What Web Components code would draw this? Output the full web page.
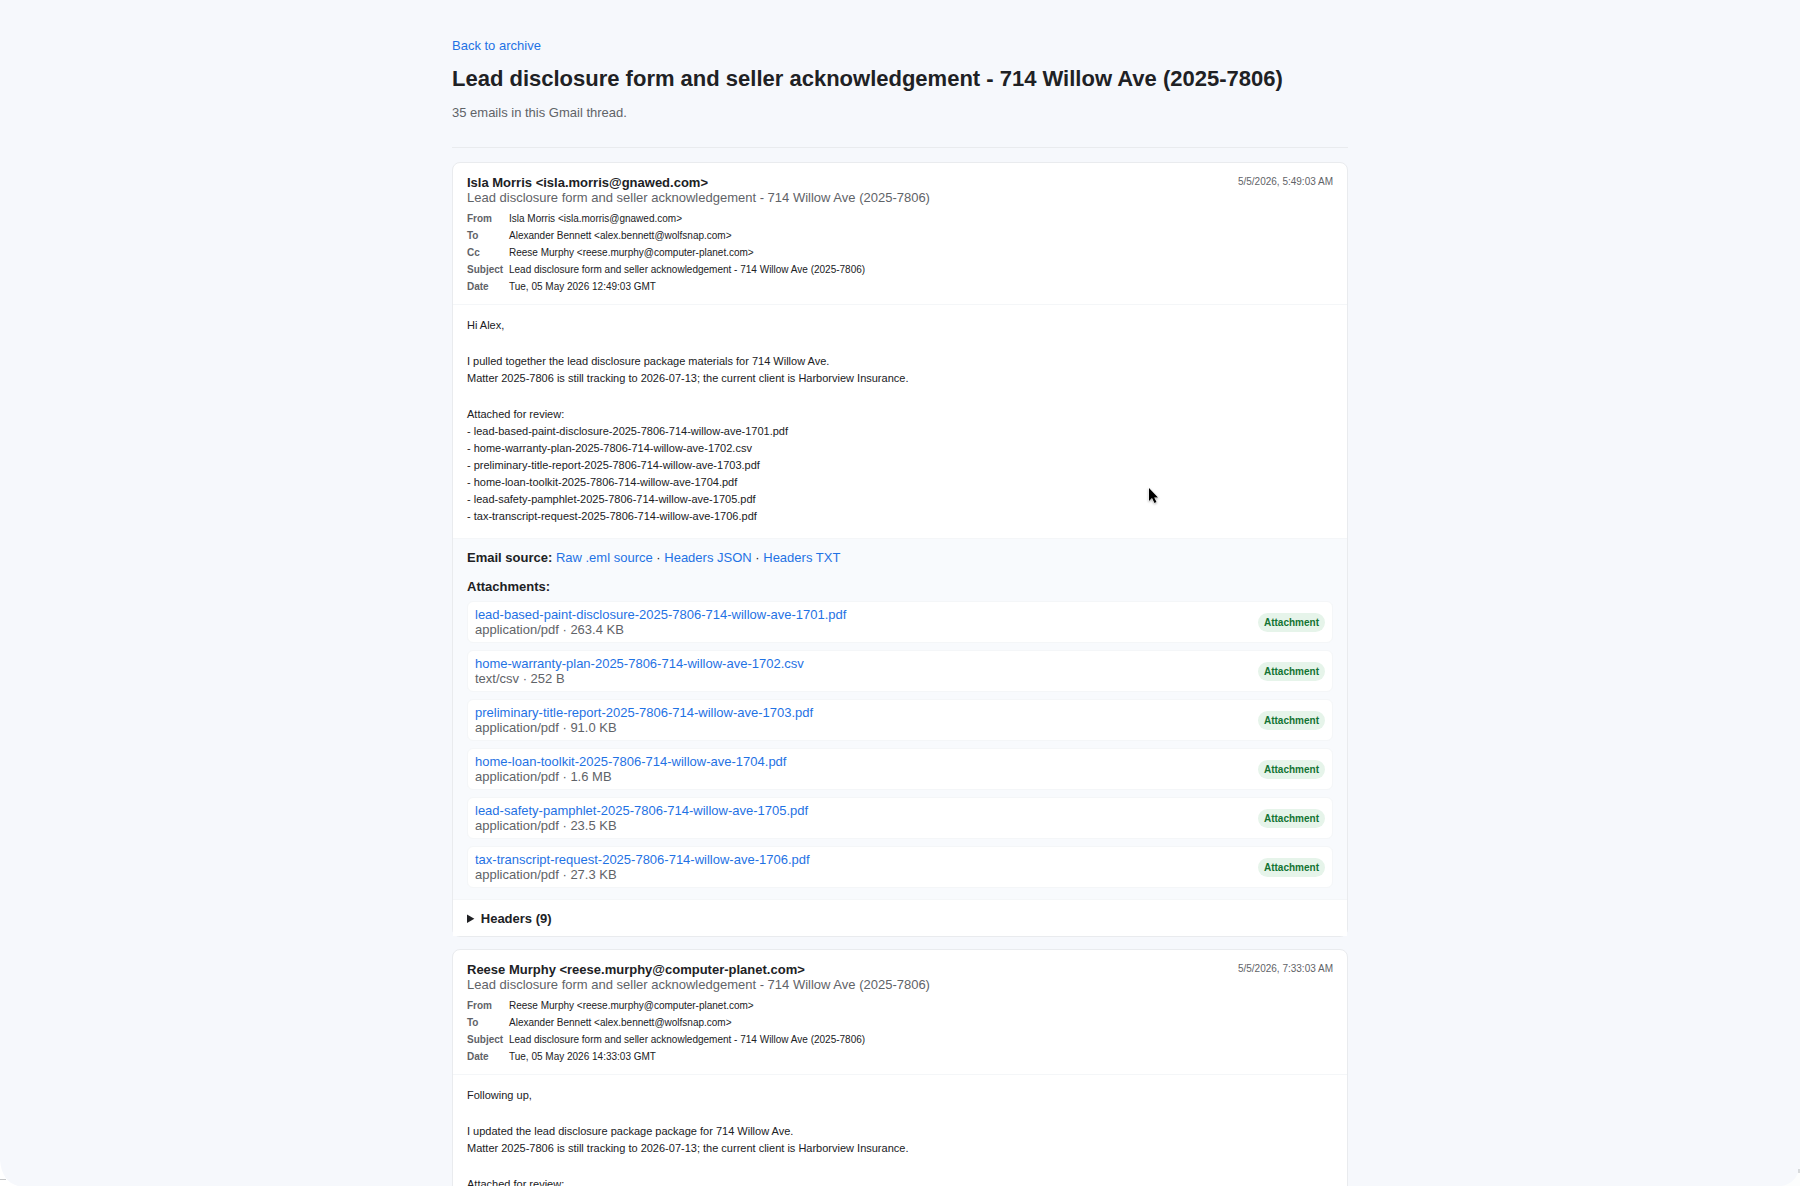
<!DOCTYPE html>
<html lang="en">
<head>
<meta charset="utf-8">
<title>Lead disclosure form and seller acknowledgement - 714 Willow Ave (2025-7806)</title>
<style>
  :root {
    --bg: #f6f8fc;
    --surface: #ffffff;
    --subtle: #f8fafd;
    --line: #e9ebee;
    --line-soft: #f4f6f8;
    --text: #202124;
    --muted: #5f6368;
    --link: #1f72e4;
    --ok: #137333;
    --ok-bg: #e6f4ea;
  }

  html {
    height: 100%;
    overflow: hidden;
  }

  body {
    margin: 0;
    background: var(--bg);
    color: var(--text);
    font: 13px/15px "Liberation Sans", Arial, sans-serif;
  }
</style>
</head>
<body>

<thread-page>
  <thread-header
    slot="header"
    heading="Lead disclosure form and seller acknowledgement - 714 Willow Ave (2025-7806)"
    summary="35 emails in this Gmail thread."></thread-header>

  <email-card
    sender="Isla Morris &lt;isla.morris@gnawed.com&gt;"
    subject="Lead disclosure form and seller acknowledgement - 714 Willow Ave (2025-7806)"
    received="5/5/2026, 5:49:03 AM"
    headers="9">
    <meta-row slot="meta" label="From">Isla Morris &lt;isla.morris@gnawed.com&gt;</meta-row>
    <meta-row slot="meta" label="To">Alexander Bennett &lt;alex.bennett@wolfsnap.com&gt;</meta-row>
    <meta-row slot="meta" label="Cc">Reese Murphy &lt;reese.murphy@computer-planet.com&gt;</meta-row>
    <meta-row slot="meta" label="Subject">Lead disclosure form and seller acknowledgement - 714 Willow Ave (2025-7806)</meta-row>
    <meta-row slot="meta" label="Date">Tue, 05 May 2026 12:49:03 GMT</meta-row>

    <p>Hi Alex,</p>
    <p>I pulled together the lead disclosure package materials for 714 Willow Ave.<br>Matter 2025-7806 is still tracking to 2026-07-13; the current client is Harborview Insurance.</p>
    <p>Attached for review:<br>- lead-based-paint-disclosure-2025-7806-714-willow-ave-1701.pdf<br>- home-warranty-plan-2025-7806-714-willow-ave-1702.csv<br>- preliminary-title-report-2025-7806-714-willow-ave-1703.pdf<br>- home-loan-toolkit-2025-7806-714-willow-ave-1704.pdf<br>- lead-safety-pamphlet-2025-7806-714-willow-ave-1705.pdf<br>- tax-transcript-request-2025-7806-714-willow-ave-1706.pdf</p>

    <attachment-item slot="attachments" name="lead-based-paint-disclosure-2025-7806-714-willow-ave-1701.pdf" type="application/pdf" size="263.4 KB"></attachment-item>
    <attachment-item slot="attachments" name="home-warranty-plan-2025-7806-714-willow-ave-1702.csv" type="text/csv" size="252 B"></attachment-item>
    <attachment-item slot="attachments" name="preliminary-title-report-2025-7806-714-willow-ave-1703.pdf" type="application/pdf" size="91.0 KB"></attachment-item>
    <attachment-item slot="attachments" name="home-loan-toolkit-2025-7806-714-willow-ave-1704.pdf" type="application/pdf" size="1.6 MB"></attachment-item>
    <attachment-item slot="attachments" name="lead-safety-pamphlet-2025-7806-714-willow-ave-1705.pdf" type="application/pdf" size="23.5 KB"></attachment-item>
    <attachment-item slot="attachments" name="tax-transcript-request-2025-7806-714-willow-ave-1706.pdf" type="application/pdf" size="27.3 KB"></attachment-item>
  </email-card>

  <email-card
    sender="Reese Murphy &lt;reese.murphy@computer-planet.com&gt;"
    subject="Lead disclosure form and seller acknowledgement - 714 Willow Ave (2025-7806)"
    received="5/5/2026, 7:33:03 AM">
    <meta-row slot="meta" label="From">Reese Murphy &lt;reese.murphy@computer-planet.com&gt;</meta-row>
    <meta-row slot="meta" label="To">Alexander Bennett &lt;alex.bennett@wolfsnap.com&gt;</meta-row>
    <meta-row slot="meta" label="Subject">Lead disclosure form and seller acknowledgement - 714 Willow Ave (2025-7806)</meta-row>
    <meta-row slot="meta" label="Date">Tue, 05 May 2026 14:33:03 GMT</meta-row>

    <p>Following up,</p>
    <p>I updated the lead disclosure package package for 714 Willow Ave.<br>Matter 2025-7806 is still tracking to 2026-07-13; the current client is Harborview Insurance.</p>
    <p>Attached for review:</p>
  </email-card>
</thread-page>

<screen-overlay></screen-overlay>

<script>
  class ThreadPage extends HTMLElement {
    constructor() {
      super();

      this.attachShadow({ mode: "open" }).innerHTML = `
        <style>
          :host {
            display: block;
          }

          main {
            box-sizing: border-box;
            max-width: 922px;
            margin: 0 auto;
            padding: 38px 13px 0;
          }

          .emails {
            display: flex;
            flex-direction: column;
            gap: 12px;
            margin-top: 14px;
          }
        </style>
        <main>
          <slot name="header"></slot>
          <div class="emails"><slot></slot></div>
        </main>
      `;
    }
  }

  class ThreadHeader extends HTMLElement {
    constructor() {
      super();

      this.attachShadow({ mode: "open" }).innerHTML = `
        <style>
          :host {
            display: block;
            padding-bottom: 27px;
            border-bottom: 1px solid var(--line);
          }

          a {
            color: var(--link);
            text-decoration: none;
          }

          h1 {
            margin: 13px 0;
            font-size: 22px;
            line-height: 26px;
          }

          p {
            margin: 0;
            color: var(--muted);
          }
        </style>
        <a href="#archive">Back to archive</a>
        <h1></h1>
        <p></p>
      `;
    }

    connectedCallback() {
      this.shadowRoot.querySelector("h1").textContent = this.getAttribute("heading");
      this.shadowRoot.querySelector("p").textContent = this.getAttribute("summary");
    }
  }

  class MetaRow extends HTMLElement {
    constructor() {
      super();

      this.attachShadow({ mode: "open" }).innerHTML = `
        <style>
          :host {
            display: grid;
            grid-template-columns: 37px 1fr;
            column-gap: 5px;
            font-size: 10px;
            line-height: 17px;
          }

          b {
            color: var(--muted);
          }
        </style>
        <b></b>
        <span><slot></slot></span>
      `;
    }

    connectedCallback() {
      this.shadowRoot.querySelector("b").textContent = this.getAttribute("label");
    }
  }

  class AttachmentItem extends HTMLElement {
    constructor() {
      super();

      this.attachShadow({ mode: "open" }).innerHTML = `
        <style>
          :host {
            display: flex;
            align-items: center;
            justify-content: space-between;
            gap: 12px;
            padding: 5px 7px;
            border: 1px solid var(--line-soft);
            border-radius: 6px;
            background: var(--surface);
          }

          a {
            display: block;
            color: var(--link);
            text-decoration: none;
          }

          .info {
            color: var(--muted);
          }

          .chip {
            padding: 0 6px;
            border-radius: 10px;
            background: var(--ok-bg);
            color: var(--ok);
            font-size: 10px;
            font-weight: bold;
            line-height: 19px;
          }
        </style>
        <div>
          <a></a>
          <div class="info"></div>
        </div>
        <span class="chip">Attachment</span>
      `;
    }

    connectedCallback() {
      const link = this.shadowRoot.querySelector("a");
      link.textContent = this.getAttribute("name");
      link.href = `#${this.getAttribute("name")}`;
      this.shadowRoot.querySelector(".info").textContent =
        `${this.getAttribute("type")} · ${this.getAttribute("size")}`;
    }
  }

  class EmailCard extends HTMLElement {
    constructor() {
      super();

      this.attachShadow({ mode: "open" }).innerHTML = `
        <style>
          :host {
            display: block;
            border: 1px solid var(--line);
            border-radius: 8px;
            background: var(--surface);
          }

          header {
            display: flex;
            justify-content: space-between;
            gap: 12px;
            padding: 12px 14px 9px;
            border-bottom: 1px solid var(--line-soft);
          }

          h2 {
            margin: 0;
            font-size: 13px;
          }

          .subject {
            margin-bottom: 5px;
          }

          .subject,
          time {
            color: var(--muted);
          }

          time {
            font-size: 10px;
            line-height: 13px;
            white-space: nowrap;
          }

          .body {
            display: flex;
            flex-direction: column;
            gap: 19px;
            padding: 12px 14px 13px;
            font-size: 11px;
            line-height: 17px;
          }

          .body ::slotted(p) {
            margin: 0;
          }

          .files {
            display: flex;
            flex-direction: column;
            gap: 7px;
            padding: 11px 14px;
            border-top: 1px solid var(--line-soft);
            border-bottom: 1px solid var(--line-soft);
            background: var(--subtle);
          }

          .source {
            margin-bottom: 7px;
          }

          .source a {
            color: var(--link);
            text-decoration: none;
          }

          details {
            background: var(--surface);
          }

          summary {
            padding: 11px 14px 10px;
            font-weight: bold;
          }
        </style>
        <header>
          <div>
            <h2></h2>
            <div class="subject"></div>
            <slot name="meta"></slot>
          </div>
          <time></time>
        </header>
        <div class="body"><slot></slot></div>
      `;
    }

    connectedCallback() {
      const root = this.shadowRoot;
      root.querySelector("h2").textContent = this.getAttribute("sender");
      root.querySelector(".subject").textContent = this.getAttribute("subject");
      root.querySelector("time").textContent = this.getAttribute("received");

      if (this.hasAttribute("headers") && !root.querySelector(".files")) {
        this._addFiles(root);
      }
    }

    _addFiles(root) {
      const template = document.createElement("template");
      template.innerHTML = `
        <section class="files">
          <div class="source">
            <b>Email source:</b>
            <a href="#eml">Raw .eml source</a> ·
            <a href="#headers-json">Headers JSON</a> ·
            <a href="#headers-txt">Headers TXT</a>
          </div>
          <b>Attachments:</b>
          <slot name="attachments"></slot>
        </section>
        <details>
          <summary>Headers (${this.getAttribute("headers")})</summary>
        </details>
      `;
      root.appendChild(template.content);
    }
  }

  // Pointer and rounded window corners, drawn above the page.
  class ScreenOverlay extends HTMLElement {
    constructor() {
      super();

      this.attachShadow({ mode: "open" }).innerHTML = `
        <style>
          :host {
            position: fixed;
            inset: 0;
            pointer-events: none;
          }

          svg {
            position: absolute;
          }

          .pointer {
            left: 1147px;
            top: 486px;
            filter: drop-shadow(0 1px 1px rgba(0, 0, 0, .3));
          }

          .left {
            left: 0;
            bottom: 0;
          }

          .right {
            right: 0;
            bottom: 0;
          }
        </style>
        <svg class="pointer" width="14" height="20" viewBox="0 0 14 20">
          <path d="M2 2v13l3-3 2.500 5 2-1-2.300-4.500H11z" fill="#000" stroke="#fff" stroke-width="1" paint-order="stroke"/>
        </svg>
        <svg class="left" width="18" height="26" viewBox="0 0 18 26">
          <path d="M0 0C1 14 7 23 18 26H0z" fill="#fff"/>
          <path d="M0 19.500h6" stroke="#c4c6c8"/>
        </svg>
        <svg class="right" width="18" height="20" viewBox="0 0 18 20">
          <path d="M18 0C16 11 10 18 0 20h18z" fill="#fcfdfd"/>
          <path d="M17 3v4" stroke="#b4b8bc"/>
        </svg>
      `;
    }
  }

  window.customElements.define("thread-page", ThreadPage);
  window.customElements.define("thread-header", ThreadHeader);
  window.customElements.define("meta-row", MetaRow);
  window.customElements.define("attachment-item", AttachmentItem);
  window.customElements.define("email-card", EmailCard);
  window.customElements.define("screen-overlay", ScreenOverlay);
</script>
</body>
</html>
